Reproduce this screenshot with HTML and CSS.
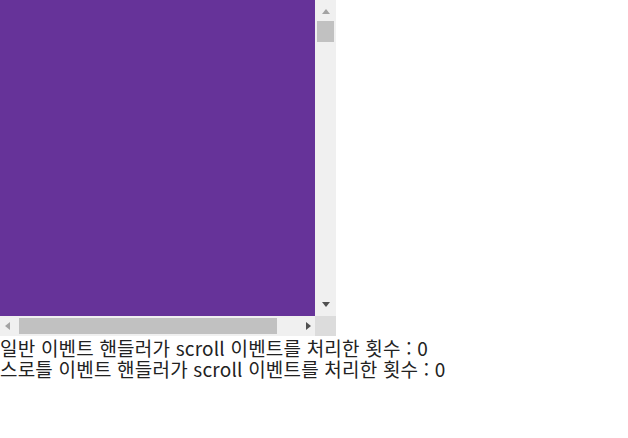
FILE: index.html
```html
<!DOCTYPE html>
<html lang="ko">
<head>
<meta charset="utf-8">
<link rel="stylesheet" href="styles.css">
</head>
<body>
<div class="scroller">
  <div class="main-row">
    <div class="viewport"></div>
    <div class="vbar">
      <div class="arrow arrow-up"></div>
      <div class="vtrack"><div class="vthumb"></div></div>
      <div class="arrow arrow-down"></div>
    </div>
  </div>
  <div class="bottom-row">
    <div class="hbar">
      <div class="harrow arrow-left"></div>
      <div class="htrack"><div class="hthumb"></div></div>
      <div class="harrow arrow-right"></div>
    </div>
    <div class="corner"></div>
  </div>
</div>
<div class="info">
  <div class="line">일반 이벤트 핸들러가 scroll 이벤트를 처리한 횟수 : <span>0</span></div>
  <div class="line">스로틀 이벤트 핸들러가 scroll 이벤트를 처리한 횟수 : <span>0</span></div>
</div>
</body>
</html>
```
FILE: styles.css
```css
html, body {
  margin: 0;
  padding: 0;
  background: #ffffff;
}
body {
  font-family: "Noto Sans CJK KR", "Noto Sans", sans-serif;
  color: #222222;
}
.scroller {
  width: 336px;
  height: 336px;
  display: flex;
  flex-direction: column;
}
.main-row {
  display: flex;
  height: 316px;
}
.viewport {
  width: 315px;
  height: 316px;
  background: #663399;
}
.vbar {
  width: 21px;
  height: 316px;
  background: #f0f0f0;
  display: flex;
  flex-direction: column;
  align-items: center;
}
.arrow {
  width: 21px;
  height: 21px;
  display: flex;
  align-items: center;
  justify-content: center;
}
.arrow-up::before {
  content: "";
  width: 0; height: 0;
  border-left: 4.5px solid transparent;
  border-right: 4.5px solid transparent;
  border-bottom: 5px solid #a3a3a3;
  margin-top: 2px;
}
.arrow-down::before {
  content: "";
  width: 0; height: 0;
  border-left: 4.5px solid transparent;
  border-right: 4.5px solid transparent;
  border-top: 5px solid #505050;
  margin-top: -2px;
}
.vtrack {
  flex: 1;
  width: 21px;
  display: flex;
  justify-content: center;
}
.vthumb {
  width: 17px;
  height: 21px;
  background: #c1c1c1;
}
.bottom-row {
  display: flex;
  height: 20px;
}
.hbar {
  width: 315px;
  height: 20px;
  background: #f0f0f0;
  display: flex;
  align-items: center;
}
.harrow {
  width: 19px;
  height: 20px;
  display: flex;
  align-items: center;
  justify-content: center;
}
.arrow-left::before {
  content: "";
  width: 0; height: 0;
  border-top: 4.5px solid transparent;
  border-bottom: 4.5px solid transparent;
  border-right: 5px solid #a3a3a3;
  margin-left: -4px;
}
.arrow-right::before {
  content: "";
  width: 0; height: 0;
  border-top: 4.5px solid transparent;
  border-bottom: 4.5px solid transparent;
  border-left: 5px solid #505050;
  margin-left: 6px;
}
.htrack {
  flex: 1;
  height: 20px;
  display: flex;
  align-items: center;
}
.hthumb {
  width: 258px;
  height: 16px;
  background: #c1c1c1;
}
.corner {
  width: 21px;
  height: 20px;
  background: #dcdcdc;
}
.info {
  font-size: 19px;
  letter-spacing: 0.2px;
  padding-top: 1px;
}
.line {
  height: 21px;
  line-height: 21px;
  white-space: nowrap;
}
```
